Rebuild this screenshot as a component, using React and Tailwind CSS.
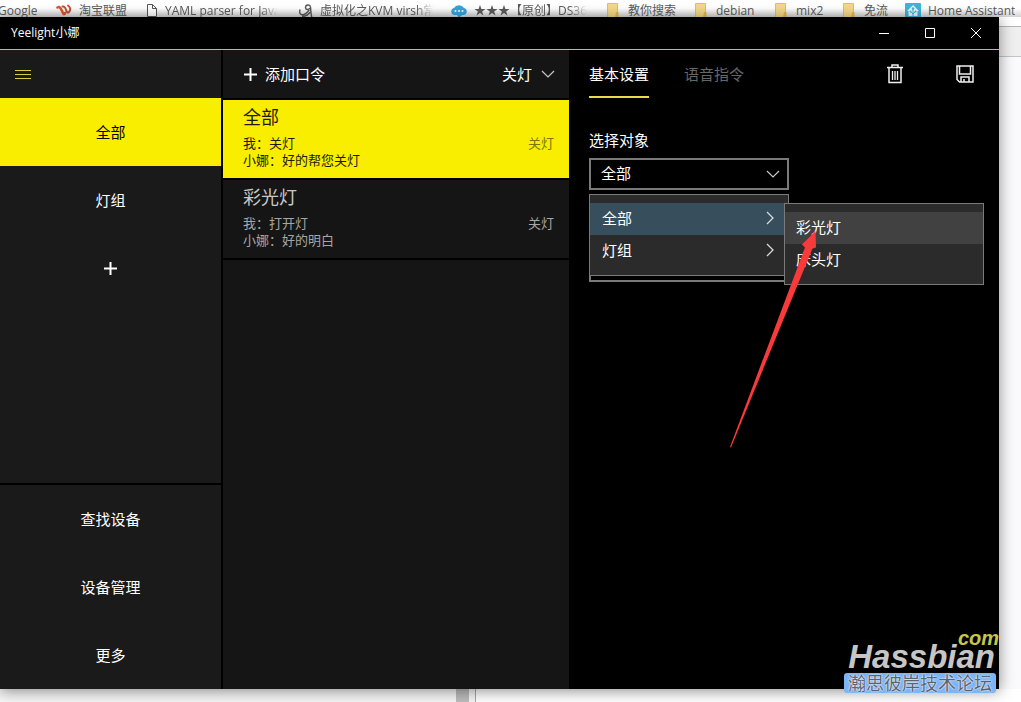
import { useState } from 'react';
import clsx from 'clsx';

function TaobaoIcon() {
  return (
    <svg width="16" height="13" viewBox="0 0 16 13" fill="none" className="shrink-0">
      <path d="M1.500 3.500C3 2.500 4 3 5 5L7 9C7.500 10.500 9 10.500 9 9" stroke="#e0552b" strokeWidth="2.600" strokeLinecap="round" />
      <path d="M6.500 2.500C8 2 9 3 10 5.500C10.500 8 11.500 9.500 13 8C15 6 14.500 3 12 1.500" stroke="#c2503a" strokeWidth="2" strokeLinecap="round" />
    </svg>
  );
}

function PageIcon() {
  return (
    <svg width="12" height="15" viewBox="0 0 12 15" fill="none" stroke="#555" className="shrink-0">
      <path d="M1.500 1.500h5l4 4v8h-9z" fill="#fff" />
      <path d="M6.500 1.500v4h4" />
    </svg>
  );
}

function KvmIcon() {
  return (
    <svg width="14" height="16" viewBox="0 0 14 16" fill="none" stroke="#555" strokeWidth="1.400" className="shrink-0">
      <path d="M11 5C10 7 6.500 7 6.500 4.500C6.500 1.500 11 1 11.500 4C12 7 11.500 11 13 15" />
      <path d="M1 6.500C0 11 2 12.500 5 11.500C8 10.500 9 8 10.500 7M3 13.500C6 13.500 9 12 11.500 9" />
    </svg>
  );
}

function CloudIcon() {
  return (
    <svg width="16" height="14" viewBox="0 0 16 14" className="shrink-0">
      <path d="M3 4a5.500 4.500 0 0 1 10 0a3.600 3.600 0 0 1 0 7h-2l-3 3l-2-3H3A3.600 3.600 0 0 1 3 4z" fill="#35a5dd" />
      <circle cx="4.500" cy="7" r="1" fill="#fff" />
      <circle cx="8" cy="7" r="1" fill="#fff" />
      <circle cx="11.500" cy="7" r="1" fill="#fff" />
    </svg>
  );
}

function FolderIcon() {
  return (
    <svg width="14" height="15" viewBox="0 0 14 15" className="shrink-0">
      <path d="M.5 .5h10v14H.5z" fill="#f5d987" stroke="#e0bf68" />
      <path d="M9 9h2.500v6H8z" fill="#e5b94b" />
    </svg>
  );
}

function HomeAssistantIcon() {
  return (
    <svg width="16" height="16" viewBox="0 0 16 16" className="shrink-0">
      <rect width="16" height="16" rx="1" fill="#41b3dc" />
      <path d="M8 2l6 6h-1.500v5h-9V8H2z" fill="#e8f6fb" />
      <path d="M8 13V6M8 11l-2.500-2.500M8 11l2.500-2.500" stroke="#41b3dc" strokeWidth="1" />
      <circle cx="8" cy="5.500" r="1.200" fill="#41b3dc" />
      <circle cx="5.500" cy="8.500" r="1" fill="#41b3dc" />
      <circle cx="10.500" cy="8.500" r="1" fill="#41b3dc" />
    </svg>
  );
}

function ChevronDown({ className }) {
  return (
    <svg width="14" height="8" viewBox="0 0 14 8" fill="none" stroke="#c8c8c8" strokeWidth="1.2" className={className}>
      <path d="M1 1l6 6 6-6" />
    </svg>
  );
}

function ChevronRight() {
  return (
    <svg width="8" height="14" viewBox="0 0 8 14" fill="none" stroke="#d8d8d8" strokeWidth="1.3">
      <path d="M1 1l6 6-6 6" />
    </svg>
  );
}

function PlusIcon() {
  return (
    <svg width="13" height="13" viewBox="0 0 13 13" stroke="#fff" strokeWidth="2">
      <path d="M6.500 0v13M0 6.500h13" />
    </svg>
  );
}

function TrashIcon() {
  return (
    <svg width="18" height="20" viewBox="0 0 18 20" fill="none" stroke="#f0f0f0" strokeWidth="1.5">
      <path d="M1 3.500h16M6 3V1h6v2M3 4v14.500h12V4" />
      <path d="M6.500 7v9M9 7v9M11.500 7v9" strokeWidth="1.3" />
    </svg>
  );
}

function SaveIcon() {
  return (
    <svg width="18" height="18" viewBox="0 0 18 18" fill="none" stroke="#f0f0f0" strokeWidth="1.5">
      <path d="M1 1h16v16H3.500L1 14.500z" />
      <path d="M3.500 1v8h11V1M5 17v-5h8v5M8 17v-3" />
    </svg>
  );
}

const bookmarks = [
  { text: 'Google', width: 'w-[56px]' },
  { text: '淘宝联盟', icon: <TaobaoIcon />, width: 'w-[90px]' },
  { text: 'YAML parser for Java', icon: <PageIcon />, width: 'w-[153px]', fade: true },
  { text: '虚拟化之KVM virsh常', icon: <KvmIcon />, width: 'w-[152px]', fade: true },
  { text: '★★★【原创】DS3617', icon: <CloudIcon />, width: 'w-[156px]', fade: true },
  { text: '教你搜索', icon: <FolderIcon />, width: 'w-[88px]' },
  { text: 'debian', icon: <FolderIcon />, width: 'w-[80px]' },
  { text: 'mix2', icon: <FolderIcon />, width: 'w-[68px]' },
  { text: '免流', icon: <FolderIcon />, width: 'w-[62px]' },
  { text: 'Home Assistant', icon: <HomeAssistantIcon />, width: 'w-[120px]' },
];

const commands = [
  { id: 1, title: '全部', me: '我：关灯', reply: '小娜：好的帮您关灯', action: '关灯' },
  { id: 2, title: '彩光灯', me: '我：打开灯', reply: '小娜：好的明白', action: '关灯' },
];

function BookmarkBar() {
  return (
    <nav className="flex h-[17px] shrink-0 overflow-hidden bg-linear-to-b from-white from-50% to-[#d4d4d4] text-[#5a5a5a]">
      {bookmarks.map((item) => (
        <a key={item.text} href="#" className={clsx('flex h-[21px] shrink-0 items-center gap-[7px]', item.width)}>
          {item.icon}
          <span
            className={clsx(
              'overflow-hidden whitespace-nowrap text-[12px] leading-5',
              item.fade && 'w-[113px] mask-r-from-85%',
              !item.icon && '-ml-[2px]'
            )}
          >
            {item.text}
          </span>
        </a>
      ))}
    </nav>
  );
}

function TitleBar() {
  return (
    <header className="flex h-[33px] shrink-0 items-center justify-between border-b border-[#c9bb5e] bg-black pl-[11px]">
      <h1 className="text-[12px]">Yeelight小娜</h1>
      <div className="flex h-full">
        <button aria-label="最小化" className="flex w-[46px] items-center justify-center">
          <svg width="10" height="10" stroke="#fff"><path d="M0 5.500h10" /></svg>
        </button>
        <button aria-label="最大化" className="flex w-[46px] items-center justify-center">
          <svg width="10" height="10" stroke="#fff" fill="none"><path d="M.5.5h9v9h-9z" /></svg>
        </button>
        <button aria-label="关闭" className="flex w-[46px] items-center justify-center">
          <svg width="10" height="10" stroke="#fff"><path d="M0 0l10 10M10 0l-10 10" /></svg>
        </button>
      </div>
    </header>
  );
}

function Sidebar() {
  const [group, setGroup] = useState('全部');

  return (
    <aside className="flex w-[221px] shrink-0 flex-col bg-[#1a1a1a] text-[15px]">
      <div className="flex h-12 items-center pl-[15px]">
        <button aria-label="菜单">
          <svg width="16" height="9" stroke="#d6cf3c"><path d="M0 .5h16M0 4.500h16M0 8.500h16" /></svg>
        </button>
      </div>
      {['全部', '灯组'].map((name) => (
        <button
          key={name}
          onClick={() => setGroup(name)}
          className={clsx('h-[68px]', group === name && 'bg-[#faee00] text-black')}
        >
          {name}
        </button>
      ))}
      <button aria-label="添加灯组" className="flex h-[68px] items-center justify-center">
        <PlusIcon />
      </button>
      <div className="mt-auto flex flex-col border-t-2 border-black">
        <button className="h-[68px]">查找设备</button>
        <button className="h-[68px]">设备管理</button>
        <button className="h-[68px]">更多</button>
      </div>
    </aside>
  );
}

function CommandList() {
  const [selected, setSelected] = useState(1);

  return (
    <section className="flex w-[346px] shrink-0 flex-col bg-[#151515]">
      <div className="flex h-[50px] items-center justify-between border-b-2 border-black pr-[14px] pl-[21px] text-[15px]">
        <button className="flex items-center gap-2">
          <PlusIcon />
          添加口令
        </button>
        <button className="flex items-center gap-[9px]">
          关灯
          <ChevronDown />
        </button>
      </div>
      {commands.map((item) => (
        <button
          key={item.id}
          onClick={() => setSelected(item.id)}
          className={clsx(
            'flex h-20 items-end justify-between border-b-2 border-black pr-[15px] pb-[9px] pl-5 text-left',
            selected === item.id ? 'bg-[#faee00] text-[#1c1a00]' : 'text-[#a6a6a6]'
          )}
        >
          <span className="flex flex-col">
            <span className={clsx('mb-[6px] text-[18px] leading-6', selected !== item.id && 'text-[#c8c8c8]')}>
              {item.title}
            </span>
            <span className="text-[13px] leading-[17px]">{item.me}</span>
            <span className="text-[13px] leading-[17px]">{item.reply}</span>
          </span>
          <span className={clsx('mb-[17px] text-[13px] leading-[17px]', selected === item.id && 'text-[#7d7700]')}>
            {item.action}
          </span>
        </button>
      ))}
    </section>
  );
}

function TargetMenu() {
  return (
    <div role="menu" className="absolute top-9 left-0 w-[200px] border border-[#7a7a7a] bg-[#2b2b2b] py-2">
      <button role="menuitem" className="flex h-8 w-full items-center justify-between bg-[#374f5c] pr-[14px] pb-[2px] pl-3">
        全部
        <ChevronRight />
      </button>
      <button role="menuitem" className="flex h-8 w-full items-center justify-between pr-[14px] pb-[2px] pl-3">
        灯组
        <ChevronRight />
      </button>

      <div role="menu" className="absolute top-2 left-[194px] w-[200px] border border-[#7a7a7a] bg-[#2b2b2b] py-2">
        <button role="menuitem" className="flex h-8 w-full items-center bg-[#414141] pb-[2px] pl-[11px]">彩光灯</button>
        <button role="menuitem" className="flex h-8 w-full items-center pb-[2px] pl-[11px]">床头灯</button>
      </div>

      {/* pointer to the lamp entry */}
      <svg width="90" height="220" viewBox="0 0 90 220" className="pointer-events-none absolute top-[35px] left-[139px]">
        <path d="M86.500 1L73 14.500L76 17.500L1 217L2 217.500L83.500 18.500L87 17.500Z" fill="#f93a3a" />
      </svg>
    </div>
  );
}

function Detail() {
  const [tab, setTab] = useState('基本设置');

  return (
    <main className="relative min-w-0 flex-1 bg-black px-5 text-[15px]">
      <div className="flex h-12 items-center justify-between">
        <div className="flex h-full gap-[35px]">
          {['基本设置', '语音指令'].map((name) => (
            <button
              key={name}
              onClick={() => setTab(name)}
              className={clsx(
                'border-y-2 border-t-transparent',
                tab === name ? 'border-b-[#e8dc4a]' : 'border-b-transparent text-[#666]'
              )}
            >
              {name}
            </button>
          ))}
        </div>
        <div className="flex items-center gap-[52px] pr-[5px]">
          <button aria-label="删除"><TrashIcon /></button>
          <button aria-label="保存"><SaveIcon /></button>
        </div>
      </div>

      <div className="pt-[31px]">
        <label htmlFor="target" className="mb-[7px] block leading-[22px]">选择对象</label>
        <div className="relative w-[200px]">
          <select
            id="target"
            defaultValue="全部"
            className="h-8 w-full appearance-none border-2 border-[#7a7a7a] bg-black pb-[2px] pl-[10px] text-white"
          >
            <option>全部</option>
            <option>灯组</option>
          </select>
          <ChevronDown className="pointer-events-none absolute top-3 right-[9px]" />
          <input aria-label="执行动作" className="mt-[60px] block h-8 w-full border-2 border-[#7a7a7a] bg-black px-[10px]" />
          <TargetMenu />
        </div>
      </div>

      <div className="absolute right-0 -bottom-1 flex flex-col items-end">
        <span className="font-['Liberation_Sans',sans-serif] text-[20px] leading-[6px] font-bold text-[#c5c64c] italic">com</span>
        <span className="mr-1 font-['Liberation_Sans',sans-serif] text-[33px] leading-8 font-bold text-[#c6c6c6] italic">Hassbian</span>
        <span className="mr-[3px] rounded-[3px] bg-[#7db4f5] px-1 text-[18px] leading-5 text-[#5c6470] text-shadow-[0_0_2px_#fff,0_0_1px_#fff]">
          瀚思彼岸技术论坛
        </span>
      </div>
    </main>
  );
}

export default function App() {
  return (
    <div className="flex min-h-screen flex-col overflow-hidden bg-white font-['Open_Sans','Noto_Sans_CJK_SC',sans-serif]">
      <BookmarkBar />
      <div className="flex flex-1">
        <div className="relative z-10 flex min-w-0 flex-1 flex-col bg-black text-white shadow-[0_2px_14px_rgba(0,0,0,0.45)]">
          <TitleBar />
          <div className="flex flex-1">
            <Sidebar />
            <div className="w-[2px] bg-black" />
            <CommandList />
            <Detail />
          </div>
        </div>
        <div className="flex w-[22px] shrink-0 flex-col">
          <div className="h-[10px] border-b border-[#b5b5b5] bg-white" />
          <div className="h-[30px] border-b border-[#c4c4c4] bg-[#efefef]" />
          <div className="flex-1 bg-[#fafafc]" />
        </div>
      </div>
      <footer className="flex h-[13px] shrink-0 bg-[#f6f6f6]">
        <div className="ml-[456px] w-[13px] bg-[#bdbdbd]" />
        <div className="ml-[6px] flex-1 border-l border-[#a8a8a8] bg-white" />
      </footer>
    </div>
  );
}
